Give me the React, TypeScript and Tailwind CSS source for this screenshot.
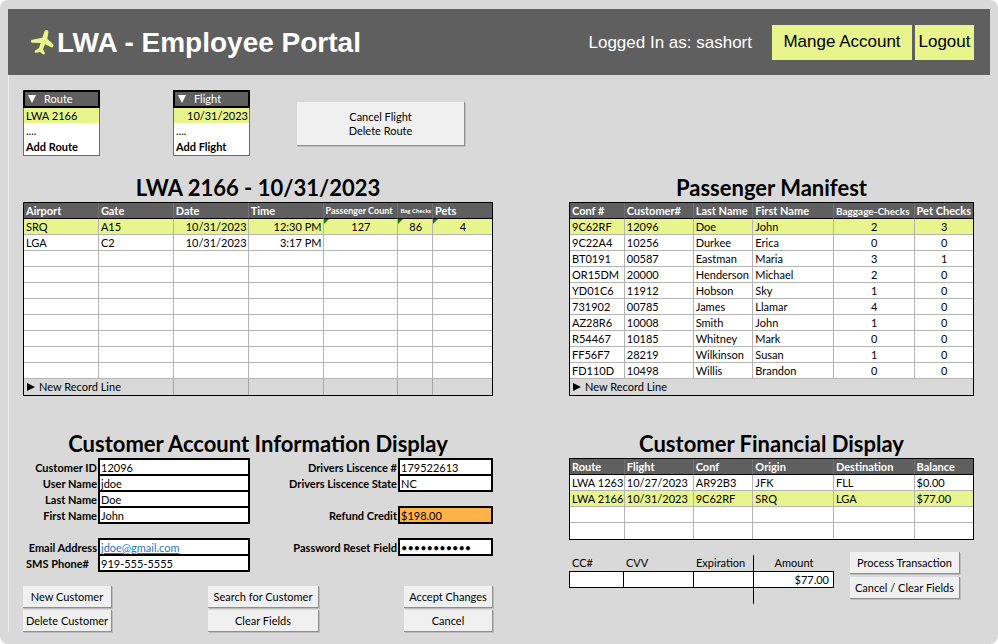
import type { ReactNode } from 'react';

type Align = 'left' | 'center' | 'right';
type Column = { label: string; align?: Align; small?: 'md' | 'sm' | 'xs'; width: string; flagged?: boolean };

const alignClass: Record<Align, string> = {
  left: 'text-left',
  center: 'text-center',
  right: 'text-right',
};

const headSize = { md: 'text-[10px]', sm: 'text-[9px]', xs: 'text-[6px]' };

const legColumns: Column[] = [
  { label: 'Airport', width: 'w-[16%]' },
  { label: 'Gate', width: 'w-[16%]' },
  { label: 'Date', align: 'right', width: 'w-[16%]' },
  { label: 'Time', align: 'right', width: 'w-[16%]' },
  { label: 'Passenger Count', align: 'center', small: 'sm', width: 'w-[16%]', flagged: true },
  { label: 'Bag Checks', align: 'center', small: 'xs', width: 'w-[7.4%]', flagged: true },
  { label: 'Pets', align: 'center', width: 'w-[12.6%]', flagged: true },
];

const legs = [
  ['SRQ', 'A15', '10/31/2023', '12:30 PM', '127', '86', '4'],
  ['LGA', 'C2', '10/31/2023', '3:17 PM', '', '', ''],
  [], [], [], [], [], [], [], [],
];

const manifestColumns: Column[] = [
  { label: 'Conf #', width: 'w-[13.6%]' },
  { label: 'Customer#', width: 'w-[17.1%]' },
  { label: 'Last Name', width: 'w-[14.8%]' },
  { label: 'First Name', width: 'w-[20%]' },
  { label: 'Baggage-Checks', align: 'center', small: 'md', width: 'w-[20%]' },
  { label: 'Pet Checks', align: 'center', width: 'w-[14.5%]' },
];

const manifest = [
  ['9C62RF', '12096', 'Doe', 'John', '2', '3'],
  ['9C22A4', '10256', 'Durkee', 'Erica', '0', '0'],
  ['BT0191', '00587', 'Eastman', 'Maria', '3', '1'],
  ['OR15DM', '20000', 'Henderson', 'Michael', '2', '0'],
  ['YD01C6', '11912', 'Hobson', 'Sky', '1', '0'],
  ['731902', '00785', 'James', 'Llamar', '4', '0'],
  ['AZ28R6', '10008', 'Smith', 'John', '1', '0'],
  ['R54467', '10185', 'Whitney', 'Mark', '0', '0'],
  ['FF56F7', '28219', 'Wilkinson', 'Susan', '1', '0'],
  ['FD110D', '10498', 'Willis', 'Brandon', '0', '0'],
];

const financeColumns: Column[] = [
  { label: 'Route', width: 'w-[13.6%]' },
  { label: 'Flight', width: 'w-[17.1%]' },
  { label: 'Conf', width: 'w-[14.8%]' },
  { label: 'Origin', width: 'w-[20%]' },
  { label: 'Destination', width: 'w-[20%]' },
  { label: 'Balance', width: 'w-[14.5%]' },
];

const finances = [
  ['LWA 1263', '10/27/2023', 'AR92B3', 'JFK', 'FLL', '$0.00'],
  ['LWA 2166', '10/31/2023', '9C62RF', 'SRQ', 'LGA', '$77.00'],
  [], [],
];

function Triangle({ direction }: { direction: 'down' | 'right' }) {
  return (
    <svg viewBox="0 0 8 8" className="inline-block size-2 shrink-0 fill-current" aria-hidden="true">
      <path d={direction === 'down' ? 'M0 0h8L4 8z' : 'M0 0l8 4-8 4z'} />
    </svg>
  );
}

function Plane() {
  return (
    <svg viewBox="0 0 69 75" className="h-[25px] w-[23px] shrink-0 fill-[#e8f48c]" aria-hidden="true">
      <path d="M45 0c4-1 7 2 7 7l-3 20 17 15c2 2 2 5 1 7-1 3-3 4-6 3l-19-9-6 15 5 9c1 2 0 6-2 6-2 1-4 0-5-2l-7-5-10 2c-3 1-6 0-6-2 0-3 1-4 3-5l10-7 5-15-25-1c-3 0-5-3-4-6 0-2 2-3 4-3l30-6 6-18c1-3 3-5 5-5z" />
    </svg>
  );
}

function Title({ children }: { children: ReactNode }) {
  return <h2 className="text-center text-[22px] leading-[29px] font-bold whitespace-nowrap">{children}</h2>;
}

function DataTable({ columns, rows, selected, footer, ruled }: {
  columns: Column[];
  rows: string[][];
  selected: number;
  footer?: boolean;
  ruled?: boolean;
}) {
  return (
    <table className="w-full table-fixed border-separate border-spacing-0 border border-black bg-white">
      <thead>
        <tr className="bg-[#5f5f5f] text-white">
          {columns.map((c) => (
            <th
              key={c.label}
              scope="col"
              className={`h-4 border-b border-black p-0 pr-px pl-[2px] text-left whitespace-nowrap not-last:border-r not-last:border-r-[#717171] ${c.width} ${c.small ? headSize[c.small] : ''}`}
            >
              {c.label}
            </th>
          ))}
        </tr>
      </thead>
      <tbody>
        {rows.map((row, r) => (
          <tr key={r} className={r === selected ? 'bg-[#e8f48c]' : ''}>
            {columns.map((c, i) => (
              <td
                key={c.label}
                className={`relative h-4 border-b border-[#b4b4b4] p-0 pr-px pl-[2px] whitespace-nowrap not-last:border-r ${!footer && r === rows.length - 1 ? 'border-b-0' : ''} ${alignClass[c.align ?? 'left']}`}
              >
                {row[i]}
                {c.flagged && r === 0 && (
                  <svg viewBox="0 0 5 5" className="absolute top-0 left-0 size-[5px] fill-[#0f7d12]" aria-hidden="true">
                    <path d="M0 0h5L0 5z" />
                  </svg>
                )}
              </td>
            ))}
          </tr>
        ))}
      </tbody>
      {footer && (
        <tfoot>
          <tr className="bg-[#d9d9d9]">
            <td colSpan={ruled ? 2 : columns.length} className={`h-4 p-0 px-[3px] ${ruled ? 'border-r border-[#a6a6a6]' : ''}`}>
              <button type="button" className="flex items-center gap-1">
                <Triangle direction="right" />
                New Record Line
              </button>
            </td>
            {ruled && columns.slice(2).map((c) => (
              <td key={c.label} className="p-0 not-last:border-r not-last:border-[#a6a6a6]" />
            ))}
          </tr>
        </tfoot>
      )}
    </table>
  );
}

function Picker({ label, value, add, right }: { label: string; value: string; add: string; right?: boolean }) {
  return (
    <div className="flex w-[77px] flex-col border border-[#6b6b6b] bg-white">
      <button type="button" className="-mx-px -mt-px flex h-[18px] items-center gap-2 border-2 border-black bg-[#5f5f5f] px-[3px] text-white">
        <Triangle direction="down" />
        {label}
      </button>
      <button type="button" className={`h-[15px] bg-[#e8f48c] pr-px pl-[2px] ${right ? 'text-right' : 'text-left'}`}>{value}</button>
      <button type="button" className="h-4 px-[2px] text-left">....</button>
      <button type="button" className="h-4 px-[2px] text-left font-bold">{add}</button>
    </div>
  );
}

function Action({ children, className = '' }: { children: ReactNode; className?: string }) {
  return (
    <button type="button" className={`h-[22px] border-r border-b border-[#8f8f8f] bg-[#f0f0f0] text-center whitespace-nowrap shadow-[1px_1px_0_#bdbdbd] ${className}`}>
      {children}
    </button>
  );
}

type FieldProps = { id: string; label: string; value: string; type?: string; labelClass?: string; inputClass?: string };

function FieldGroup({ fields, columns }: { fields: FieldProps[]; columns: string }) {
  return (
    <div>
      {fields.map((f, i) => (
        <div key={f.id} className={`grid ${columns}`}>
          <label htmlFor={f.id} className={`self-end pr-px leading-4 font-bold whitespace-nowrap ${f.labelClass ?? 'text-right'}`}>
            {f.label}
          </label>
          <input
            id={f.id}
            type={f.type ?? 'text'}
            defaultValue={f.value}
            className={`w-full min-w-0 rounded-none border-x-2 border-b-2 border-black px-px outline-none ${i === 0 ? 'h-[18px] border-t-2' : 'h-4'} ${f.inputClass ?? 'bg-white'}`}
          />
        </div>
      ))}
    </div>
  );
}

const leftColumns = 'grid-cols-[75fr_152fr]';
const rightColumns = 'grid-cols-[148fr_95fr]';
const payInput = 'h-[17px] w-full min-w-0 rounded-none border-y border-l border-black bg-white px-1 outline-none';

export default function App() {
  return (
    <div className="min-h-screen rounded-lg bg-[#d9d9d9] px-2 pt-[9px] pb-2 font-[Lato,'Liberation_Sans',sans-serif] text-[11px] leading-[14px] text-black">
      <header className="flex h-[66px] items-center bg-[#5f5f5f] pr-4 pl-[23px] font-['Liberation_Sans',Arial,sans-serif] text-[17px] leading-6">
        <Plane />
        <h1 className="ml-[3px] pt-[2px] text-[28px] leading-9 font-bold text-white">LWA - Employee Portal</h1>
        <p className="mr-5 ml-auto pt-[2px] text-white">Logged In as: sashort</p>
        <button type="button" className="mr-[3px] h-[35px] w-[140px] bg-[#e8f48c]">Mange Account</button>
        <button type="button" className="h-[35px] w-[59px] bg-[#e8f48c]">Logout</button>
      </header>

      <main className="border-l border-[#ececec] pr-4 pl-[14px]">
        <div className="grid grid-cols-[470fr_405fr] gap-x-[76px]">
          <div className="grid grid-cols-[150fr_124fr_196fr] pt-[15px]">
            <Picker label="Route" value="LWA 2166" add="Add Route" />
            <Picker label="Flight" value="10/31/2023" add="Add Flight" right />
            <Action className="mt-3 h-[44px] w-[168px]">
              Cancel Flight
              <br />
              Delete Route
            </Action>
          </div>
        </div>

        <div className="mt-[17px] grid grid-cols-[470fr_405fr] gap-x-[76px]">
          <section>
            <Title>LWA 2166 - 10/31/2023</Title>
            <DataTable columns={legColumns} rows={legs} selected={0} footer ruled />
          </section>
          <section>
            <Title>Passenger Manifest</Title>
            <DataTable columns={manifestColumns} rows={manifest} selected={0} footer />
          </section>
        </div>

        <div className="mt-[33px] grid grid-cols-[470fr_405fr] gap-x-[76px]">
          <section>
            <Title>Customer Account Information Display</Title>
            <div className="grid grid-cols-[227fr_243fr]">
              <div className="flex flex-col gap-[14px]">
                <FieldGroup
                  columns={leftColumns}
                  fields={[
                    { id: 'customer-id', label: 'Customer ID', value: '12096' },
                    { id: 'user-name', label: 'User Name', value: 'jdoe' },
                    { id: 'last-name', label: 'Last Name', value: 'Doe' },
                    { id: 'first-name', label: 'First Name', value: 'John' },
                  ]}
                />
                <FieldGroup
                  columns={leftColumns}
                  fields={[
                    { id: 'email', label: 'Email Address', value: 'jdoe@gmail.com', type: 'email', inputClass: 'bg-white text-[#2a76c6] underline' },
                    { id: 'phone', label: 'SMS Phone#', value: '919-555-5555', type: 'tel', labelClass: 'pl-[3px] text-left' },
                  ]}
                />
              </div>
              <div className="flex flex-col gap-[14px]">
                <FieldGroup
                  columns={rightColumns}
                  fields={[
                    { id: 'licence', label: 'Drivers Liscence #', value: '179522613' },
                    { id: 'licence-state', label: 'Drivers Liscence State', value: 'NC' },
                  ]}
                />
                <FieldGroup
                  columns={rightColumns}
                  fields={[{ id: 'refund', label: 'Refund Credit', value: '$198.00', inputClass: 'bg-[#ffb347]' }]}
                />
                <FieldGroup
                  columns={rightColumns}
                  fields={[{ id: 'password', label: 'Password Reset Field', value: 'abcdefghijk', type: 'password' }]}
                />
              </div>
            </div>
            <div className="mt-[14px] grid grid-cols-[185fr_196fr_89fr] gap-y-[2px]">
              <Action className="w-[89px]">New Customer</Action>
              <Action className="w-[111px]">Search for Customer</Action>
              <Action>Accept Changes</Action>
              <Action className="w-[89px]">Delete Customer</Action>
              <Action className="w-[111px]">Clear Fields</Action>
              <Action>Cancel</Action>
            </div>
          </section>

          <section>
            <Title>Customer Financial Display</Title>
            <DataTable columns={financeColumns} rows={finances} selected={1} />
            <div className="mt-3 grid grid-cols-[265fr_140fr]">
              <div className="mt-[3px] grid grid-cols-[54fr_70fr_60fr_81fr]">
                <div>
                  <label htmlFor="cc" className="block pl-[3px] leading-4">CC#</label>
                  <input id="cc" className={payInput} />
                </div>
                <div>
                  <label htmlFor="cvv" className="block pl-[3px] leading-4">CVV</label>
                  <input id="cvv" className={payInput} />
                </div>
                <div>
                  <label htmlFor="expiration" className="block pl-[3px] leading-4">Expiration</label>
                  <input id="expiration" className={payInput} />
                </div>
                <div className="border-l border-black pb-4">
                  <label htmlFor="amount" className="block text-center leading-4">Amount</label>
                  <input id="amount" defaultValue="$77.00" className="h-[17px] w-full min-w-0 rounded-none border-y border-r border-black bg-white px-1 text-right outline-none" />
                </div>
              </div>
              <div className="flex flex-col gap-[3px] pr-[14px] pl-4">
                <Action>Process Transaction</Action>
                <Action>Cancel / Clear Fields</Action>
              </div>
            </div>
          </section>
        </div>
      </main>
    </div>
  );
}
